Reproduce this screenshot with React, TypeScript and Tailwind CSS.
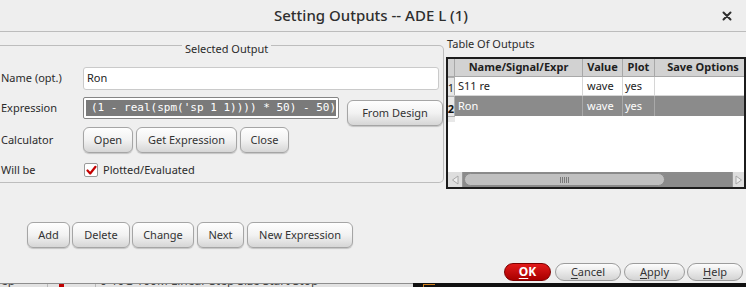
import React from "react";

const btn =
  "flex items-center justify-center h-[26px] rounded-[6px] border border-[#a5a5a5] bg-linear-to-b from-[#fefefe] via-[#f2f2f2] to-[#d6d6d6] shadow-[0_1px_1px_rgba(0,0,0,0.18)] text-[#333] text-[11px] shrink-0";
const pill =
  "flex items-center justify-center h-[18px] rounded-full border border-[#9c9c9c] bg-linear-to-b from-[#fdfdfd] to-[#d4d4d4] text-[#333] text-[11px] shrink-0";

function Check() {
  return (
    <div className="w-[14px] h-[14px] bg-white border border-[#9a9a9a] rounded-[2px] flex items-center justify-center">
      <svg width="11" height="11" viewBox="0 0 11 11">
        <path d="M1.5 5.5 L4.2 8.5 L9.5 1.8" fill="none" stroke="#c40000" strokeWidth="2.2" strokeLinecap="round" strokeLinejoin="round" />
      </svg>
    </div>
  );
}

export default function App() {
  return (
    <div className="w-[746px] h-[287px] overflow-hidden bg-[#efefef] flex flex-col font-['Noto_Sans',sans-serif] text-[11px] text-[#2b2b2b]">
      {/* Title bar */}
      <div className="relative h-[32px] shrink-0 flex items-center justify-center border-b border-[#bcbcbc] bg-[#eeeeee]">
        <span className="text-[15px] font-medium text-[#2e2e2e] mr-[4px]">Setting Outputs -- ADE L (1)</span>
        <svg className="absolute right-[14px] top-[11px]" width="10" height="10" viewBox="0 0 10 10">
          <path d="M1.5 1.5 L8.5 8.5 M8.5 1.5 L1.5 8.5" stroke="#2e2e2e" strokeWidth="2" strokeLinecap="round" />
        </svg>
      </div>

      {/* Main row */}
      <div className="flex h-[158px] shrink-0">
        {/* Left panel */}
        <div className="w-[444px] shrink-0 pt-[13px]">
          <div className="relative h-[138px] border-t border-r border-b border-[#bdbdbd] rounded-r-[5px] pt-[21px]">
            <div className="absolute left-[182px] top-[-5px] px-[3px] bg-[#efefef] leading-[16px] text-[#2b2b2b]">Selected Output</div>
            {/* Name */}
            <div className="flex items-center h-[23px]">
              <div className="w-[83px] pl-[1px]">Name (opt.)</div>
              <div className="w-[356px] h-[23px] bg-white border border-[#cacaca] rounded-[3px] flex items-center pl-[3px] text-[#222]">Ron</div>
            </div>
            {/* Expression */}
            <div className="flex items-start mt-[7px]">
              <div className="w-[83px] pl-[1px] h-[22px] flex items-center">Expression</div>
              <div className="w-[256px] h-[22px] bg-white border border-[#858585] rounded-[2px] p-[2px]">
                <div className="h-full bg-[#7a7a7a] text-white font-['DejaVu_Sans_Mono',monospace] text-[11px] leading-[16px] whitespace-pre overflow-hidden pl-[5px]">
                  (1 - real(spm('sp 1 1)))) * 50) - 50)
                </div>
              </div>
              <div className={`${btn} w-[96px] ml-[8px] mt-[3px]`}>From Design</div>
            </div>
            {/* Calculator */}
            <div className="flex items-center mt-[1px]">
              <div className="w-[83px] pl-[1px]">Calculator</div>
              <div className={`${btn} w-[50px]`}>Open</div>
              <div className={`${btn} w-[101px] ml-[3px]`}>Get Expression</div>
              <div className={`${btn} w-[49px] ml-[3px]`}>Close</div>
            </div>
            {/* Will be */}
            <div className="flex items-center mt-[9px]">
              <div className="w-[84px] pl-[1px]">Will be</div>
              <Check />
              <span className="ml-[5px]">Plotted/Evaluated</span>
            </div>
          </div>
        </div>

        {/* Right panel */}
        <div className="flex-1 flex flex-col min-w-0">
          <div className="mt-[4px] h-[16px] leading-[16px] pl-[3px]">Table Of Outputs</div>
          <div className="mt-[5px] ml-[2px] h-[132px] border-2 border-[#1c1c1c] bg-white flex flex-col overflow-hidden">
            {/* header */}
            <div className="flex h-[18px] bg-[#d2d2d2] border-b border-[#a8a8a8] font-bold text-[#1e1e1e] shrink-0">
              <div className="w-[7px] shrink-0 border-r border-[#a8a8a8]" />
              <div className="w-[128px] shrink-0 border-r border-[#a8a8a8] flex items-center justify-center">Name/Signal/Expr</div>
              <div className="w-[40px] shrink-0 border-r border-[#a8a8a8] flex items-center justify-center">Value</div>
              <div className="w-[32px] shrink-0 border-r border-[#a8a8a8] flex items-center justify-center">Plot</div>
              <div className="w-[96px] shrink-0 flex items-center justify-center">Save Options</div>
            </div>
            {/* row 1 */}
            <div className="flex h-[19px] bg-white border-b border-[#d6d6d6] shrink-0 text-[#222]">
              <div className="w-[7px] shrink-0 bg-[#e8e8e8] border-r border-t border-[#b0b0b0] flex items-end justify-center text-[11px] leading-[14px]">1</div>
              <div className="w-[128px] shrink-0 border-r border-[#d6d6d6] flex items-center pl-[3px]">S11 re</div>
              <div className="w-[40px] shrink-0 border-r border-[#d6d6d6] flex items-center pl-[4px]">wave</div>
              <div className="w-[32px] shrink-0 border-r border-[#d6d6d6] flex items-center pl-[2px]">yes</div>
              <div className="flex-1" />
            </div>
            {/* row 2 */}
            <div className="flex h-[20px] bg-[#8b8b8b] shrink-0 text-white">
              <div className="w-[7px] shrink-0 bg-[#e8e8e8] border-r border-t border-[#b0b0b0] flex items-end justify-center font-bold text-[#111] leading-[15px]">2</div>
              <div className="w-[128px] shrink-0 border-r border-[#a9a9a9] flex items-center pl-[3px]">Ron</div>
              <div className="w-[40px] shrink-0 border-r border-[#a9a9a9] flex items-center pl-[4px]">wave</div>
              <div className="w-[32px] shrink-0 border-r border-[#a9a9a9] flex items-center pl-[2px]">yes</div>
              <div className="flex-1" />
            </div>
            <div className="flex">
              <div className="w-[7px] h-[6px] border-t border-[#b0b0b0] bg-[#e8e8e8]" />
            </div>
            <div className="flex-1" />
            {/* scrollbar */}
            <div className="flex h-[15px] bg-[#8b8b8b] shrink-0">
              <div className="w-[15px] h-full bg-[#dedede] border-r border-[#9a9a9a] flex items-center justify-center">
                <svg width="8" height="10" viewBox="0 0 8 10"><path d="M7 1 L1.5 5 L7 9 Z" fill="#eeeeee" stroke="#a8a8a8" strokeWidth="1" /></svg>
              </div>
              <div className="w-[201px] h-[13px] mt-[1px] ml-[1px] rounded-full bg-[#c0c0c0] border border-[#8a8a8a] flex items-center justify-center">
                <div className="flex gap-[1px]">
                  <div className="w-px h-[6px] bg-[#7a7a7a]" />
                  <div className="w-px h-[6px] bg-[#7a7a7a]" />
                  <div className="w-px h-[6px] bg-[#7a7a7a]" />
                  <div className="w-px h-[6px] bg-[#7a7a7a]" />
                  <div className="w-px h-[6px] bg-[#7a7a7a]" />
                </div>
              </div>
              <div className="flex-1" />
              <div className="w-[12px] h-full bg-[#dedede] border-l border-[#9a9a9a] flex items-center justify-center">
                <svg width="8" height="10" viewBox="0 0 8 10"><path d="M1 1 L6.5 5 L1 9 Z" fill="#eeeeee" stroke="#a8a8a8" strokeWidth="1" /></svg>
              </div>
            </div>
          </div>
        </div>
      </div>

      {/* Action buttons */}
      <div className="flex mt-[32px] ml-[27px] h-[26px] shrink-0">
        <div className={`${btn} w-[43px]`}>Add</div>
        <div className={`${btn} w-[58px] ml-[2px]`}>Delete</div>
        <div className={`${btn} w-[62px] ml-[2px]`}>Change</div>
        <div className={`${btn} w-[47px] ml-[3px]`}>Next</div>
        <div className={`${btn} w-[106px] ml-[3px]`}>New Expression</div>
      </div>

      {/* OK row */}
      <div className="flex justify-end mt-[15px] h-[18px] pr-[3px] shrink-0">
        <div className="flex items-center justify-center h-[18px] w-[47px] rounded-full border border-[#7c0000] bg-linear-to-b from-[#e21a1a] to-[#a80000] text-white font-bold text-[12px]">
          <span className="underline underline-offset-2">O</span>K
        </div>
        <div className={`${pill} w-[66px] ml-[4px]`}><span className="underline underline-offset-2">C</span>ancel</div>
        <div className={`${pill} w-[61px] ml-[3px]`}><span className="underline underline-offset-2">A</span>pply</div>
        <div className={`${pill} w-[56px] ml-[2px]`}><span className="underline underline-offset-2">H</span>elp</div>
      </div>

      {/* Background window peeking at the bottom */}
      <div className="mt-[2px] flex h-[4px] shrink-0 overflow-hidden">
        <div className="w-[413px] shrink-0 bg-[#e2e2e2] border-t border-[#8e8e8e] flex overflow-hidden">
          <div className="w-[48px] border-r border-[#b8b8b8] text-[12px] leading-[12px] -mt-[9px] pl-[1px] text-[#444]">ep</div>
          <div className="w-[48px] border-r border-[#b8b8b8] flex justify-center">
            <div className="w-[5px] h-[3px] bg-[#c00000] ml-[-20px]" />
          </div>
          <div className="pl-[4px] text-[12px] leading-[12px] -mt-[9px] text-[#444] whitespace-nowrap">0-10G 100M Linear Step Size Start Stop</div>
        </div>
        <div className="flex-1 bg-[#111] relative">
          <div className="absolute left-[10px] top-[1px] w-[12px] h-[1px] bg-[#d08020]" />
          <div className="absolute left-[10px] top-[1px] w-[1px] h-[3px] bg-[#d08020]" />
        </div>
      </div>
    </div>
  );
}
